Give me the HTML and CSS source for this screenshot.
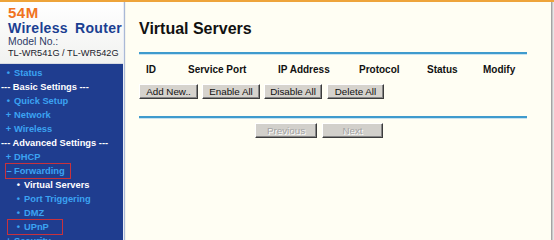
FILE: index.html
```html
<!DOCTYPE html>
<html>
<head>
<meta charset="utf-8">
<title>Virtual Servers</title>
<link rel="stylesheet" href="styles.css">
</head>
<body>
<div class="page">
  <aside class="sidebar">
    <div class="brand">
      <div class="b54">54M</div>
      <div class="bwr">Wireless Router</div>
      <div class="bmodel">Model No.:</div>
      <div class="btl">TL-WR541G / TL-WR542G</div>
    </div>
    <ul class="nav">
      <li class="item"><span class="row"><span class="mark">•</span>Status</span></li>
      <li class="section">--- Basic Settings ---</li>
      <li class="item"><span class="row"><span class="mark">•</span>Quick Setup</span></li>
      <li class="item"><span class="row"><span class="mark">+</span>Network</span></li>
      <li class="item"><span class="row"><span class="mark">+</span>Wireless</span></li>
      <li class="section">--- Advanced Settings ---</li>
      <li class="item"><span class="row"><span class="mark">+</span>DHCP</span></li>
      <li class="item boxed fwd"><span class="row"><span class="mark">–</span>Forwarding</span></li>
      <li class="item sub current"><span class="row"><span class="mark">•</span>Virtual Servers</span></li>
      <li class="item sub"><span class="row"><span class="mark">•</span>Port Triggering</span></li>
      <li class="item sub"><span class="row"><span class="mark">•</span>DMZ</span></li>
      <li class="item sub boxed upnp"><span class="row"><span class="mark">•</span>UPnP</span></li>
      <li class="item"><span class="row"><span class="mark">+</span>Security</span></li>
    </ul>
  </aside>
  <div class="divider"></div>
  <main class="content">
    <h1 class="title">Virtual Servers</h1>
    <div class="rule"></div>
    <div class="thead">
      <span>ID</span>
      <span>Service Port</span>
      <span>IP Address</span>
      <span>Protocol</span>
      <span>Status</span>
      <span>Modify</span>
    </div>
    <div class="actions">
      <button class="btn w59">Add New..</button>
      <button class="btn w58">Enable All</button>
      <button class="btn w58 g5">Disable All</button>
      <button class="btn w57">Delete All</button>
    </div>
    <div class="rule rule2"></div>
    <div class="pager">
      <button class="btn dis w62" disabled>Previous</button>
      <button class="btn dis w61" disabled>Next</button>
    </div>
  </main>
  <div class="edge"></div>
</div>
</body>
</html>
```
FILE: styles.css
```css
html, body {
  margin: 0;
  padding: 0;
  background: #fffef3;
}
body {
  font-family: "Liberation Sans", Arial, sans-serif;
}
.page {
  width: 554px;
  height: 240px;
  box-sizing: border-box;
  border-top: 2px solid #eea43a;
  display: flex;
  overflow: hidden;
}
.sidebar {
  width: 123px;
  flex: none;
  background: #1f3d8f;
  display: flex;
  flex-direction: column;
}
.brand {
  flex: none;
  height: 62px;
  box-sizing: border-box;
  padding: 3px 0 0 8px;
  background: linear-gradient(#ffffff, #f1f2f0);
  border-bottom: 1px solid #d8dbe2;
  white-space: nowrap;
}
.b54 {
  color: #f0731e;
  font-weight: bold;
  font-size: 15px;
  line-height: 16px;
  letter-spacing: 0.5px;
}
.bwr {
  color: #1b3f92;
  font-weight: bold;
  font-size: 14px;
  line-height: 14px;
  letter-spacing: 0.3px;
  word-spacing: 3px;
}
.bmodel {
  color: #2e3b66;
  font-size: 10.4px;
  line-height: 13px;
}
.btl {
  color: #1a1c2c;
  font-size: 9.2px;
  line-height: 11px;
}
.nav {
  flex: none;
  list-style: none;
  margin: 0;
  padding: 2px 0 0 0;
  font-size: 9.3px;
  font-weight: bold;
  white-space: nowrap;
}
.nav li {
  height: 14px;
  line-height: 14px;
}
.section {
  color: #ffffff;
  padding-left: 1px;
}
.item {
  color: #3ba3f2;
  padding-left: 5px;
}
.item .row {
  display: inline-flex;
  align-items: center;
  height: 14px;
  box-sizing: border-box;
}
.item .mark {
  width: 7px;
  margin-right: 2px;
  text-align: center;
}
.sub {
  padding-left: 7px;
}
.sub .row {
  padding-left: 7px;
}
.sub .mark {
  width: 9px;
  margin-right: 1px;
}
.current {
  color: #ffffff;
}
.boxed .row {
  border: 1px solid #c8323c;
  height: 16px;
  margin-top: -1px;
}
.fwd .row {
  width: 66px;
}
.fwd .mark {
  width: 6px;
}
.upnp .row {
  width: 56px;
  padding-left: 6px;
}
.divider {
  width: 3px;
  flex: none;
  background: linear-gradient(90deg, #e9edf5 0, #e9edf5 1px, #aab9d6 1px, #aab9d6 2px, #f3f3ea 2px);
}
.content {
  flex: 1;
  padding: 17px 24px 0 13px;
  background: #fffef3;
}
.edge {
  width: 3px;
  flex: none;
  background: linear-gradient(90deg, #a4a4a4 0, #a4a4a4 1px, #c8c8c8 1px, #c8c8c8 2px, #e6e6e6 2px);
}
.title {
  margin: 0;
  font-size: 16px;
  line-height: 20px;
  font-weight: bold;
  color: #111111;
}
.rule {
  height: 2px;
  margin-top: 13px;
  background: #3f9bcd;
  box-shadow: 0 1px 0 #c9e3f0;
}
.thead {
  display: grid;
  grid-template-columns: 42px 90px 81px 68px 56px auto;
  padding-left: 7px;
  margin-top: 9px;
  height: 14px;
  line-height: 14px;
  font-size: 10px;
  font-weight: bold;
  color: #111111;
  white-space: nowrap;
}
.actions {
  display: flex;
  gap: 4px;
  margin-top: 7px;
}
.btn {
  height: 15px;
  box-sizing: border-box;
  padding: 0;
  margin: 0;
  font-family: "Liberation Sans", Arial, sans-serif;
  font-size: 9.8px;
  line-height: 13px;
  color: #111111;
  background: #d6d3cd;
  border-top: 1px solid #ffffff;
  border-left: 1px solid #ffffff;
  border-right: 1px solid #3c3c3c;
  border-bottom: 1px solid #3c3c3c;
  box-shadow: inset -1px -1px 0 #868686;
  text-align: center;
}
.w59 { width: 59px; }
.w58 { width: 58px; }
.w57 { width: 57px; }
.w62 { width: 62px; }
.w61 { width: 61px; }
.g5 { margin-right: 1px; }
.rule2 {
  margin-top: 17px;
}
.pager {
  display: flex;
  gap: 5px;
  margin-top: 5px;
  padding-left: 116px;
}
.dis {
  color: #a3a3a3;
  text-shadow: 1px 1px 0 #ffffff;
  background: #d2d0cb;
}
```
